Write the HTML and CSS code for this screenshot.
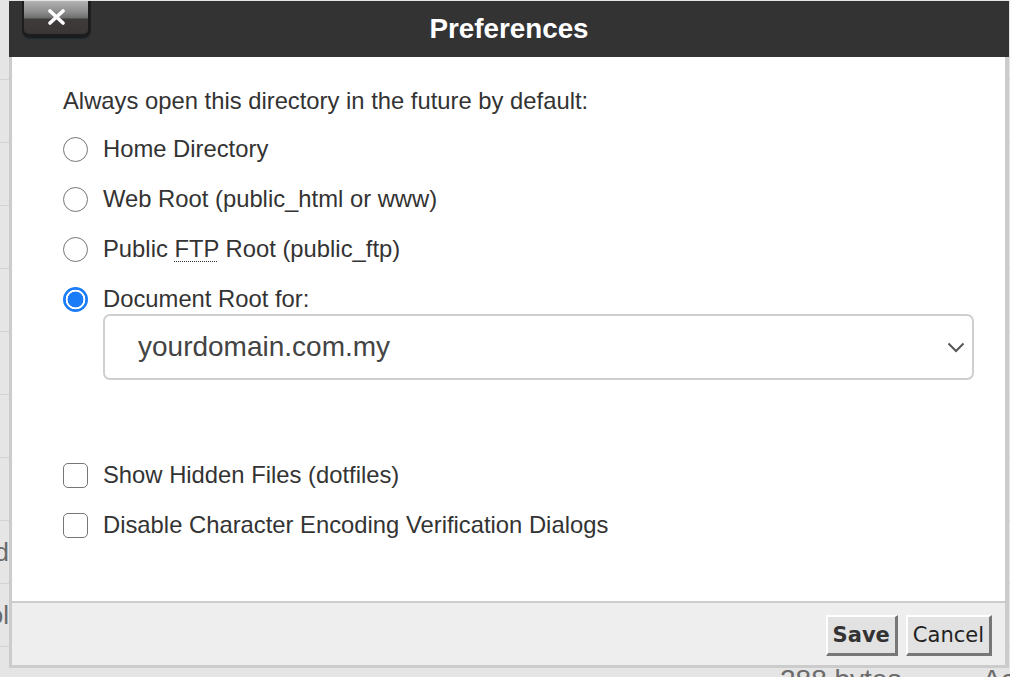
FILE: index.html
```html
<!DOCTYPE html>
<html lang="en">
<head>
<meta charset="utf-8">
<title>Preferences</title>
<link rel="stylesheet" href="styles.css">
</head>
<body>
<div class="page">
  <div class="bg-row"><span class="bg-cell"></span></div>
  <div class="bg-row"><span class="bg-cell"></span></div>
  <div class="bg-row"><span class="bg-cell"></span></div>
  <div class="bg-row"><span class="bg-cell"></span></div>
  <div class="bg-row"><span class="bg-cell"></span></div>
  <div class="bg-row"><span class="bg-cell"></span></div>
  <div class="bg-row"><span class="bg-cell"></span></div>
  <div class="bg-row"><span class="bg-cell"></span></div>
  <div class="bg-row"><span class="bg-cell">Shared</span></div>
  <div class="bg-row"><span class="bg-cell">Tool</span></div>
  <div class="bg-last"><span class="bg-size">288 bytes</span><span class="bg-type">Ac</span></div>
</div>

<div class="dialog">
  <header class="dlg-head">
    <div class="head-left">
      <button class="close" type="button" aria-label="Close">
        <svg class="close-x" width="19" height="16" viewBox="0 0 19 16"><path d="M3 2 L16 14 M16 2 L3 14" stroke="#fff" stroke-width="3.6" stroke-linecap="round"/></svg>
      </button>
    </div>
    <h1 class="title">Preferences</h1>
    <div></div>
  </header>
  <div class="frame">
    <div class="dlg-body">
      <p class="intro">Always open this directory in the future by default:</p>
      <div class="radios">
        <label class="opt"><input class="radio" type="radio" name="dir"><span>Home Directory</span></label>
        <label class="opt"><input class="radio" type="radio" name="dir"><span>Web Root (public_html or www)</span></label>
        <label class="opt"><input class="radio" type="radio" name="dir"><span>Public <abbr title="File Transfer Protocol">FTP</abbr> Root (public_ftp)</span></label>
        <label class="opt"><input class="radio" type="radio" name="dir" checked><span>Document Root for:</span></label>
      </div>
      <div class="select">
        <span>yourdomain.com.my</span>
        <svg class="chev" width="18" height="11" viewBox="0 0 18 11"><path d="M1.5 1.5 L9 9 L16.5 1.5" fill="none" stroke="#555" stroke-width="2"/></svg>
      </div>
      <div class="checks">
        <label class="opt"><input class="check" type="checkbox"><span>Show Hidden Files (dotfiles)</span></label>
        <label class="opt"><input class="check" type="checkbox"><span>Disable Character Encoding Verification Dialogs</span></label>
      </div>
    </div>
    <div class="dlg-foot">
      <button class="btn btn-save" type="button">Save</button>
      <button class="btn" type="button">Cancel</button>
    </div>
  </div>
</div>
</body>
</html>
```

FILE: styles.css
```css
html, body {
  margin: 0;
  padding: 0;
}
body {
  width: 1010px;
  height: 677px;
  overflow: hidden;
  background: #e5e5e5;
  font-family: "Liberation Sans", Arial, sans-serif;
  position: relative;
}

/* background page (partly visible) */
.page {
  display: flex;
  flex-direction: column;
  padding-top: 17px;
}
.bg-row {
  height: 63px;
  border-bottom: 1px solid #d2d2d2;
  display: flex;
  align-items: center;
  box-sizing: border-box;
  color: #6a6a6a;
  font-size: 26px;
}
.bg-cell {
  width: 9px;
  overflow: hidden;
  white-space: nowrap;
  direction: rtl;
  text-align: left;
}
.bg-last {
  display: flex;
  padding-top: 17px;
  color: #6a6a6a;
  font-size: 28px;
  line-height: 32px;
  white-space: nowrap;
}
.bg-size {
  margin-left: 780px;
}
.bg-type {
  margin-left: 81px;
}

/* dialog */
.dialog {
  position: absolute;
  left: 9px;
  top: 1px;
  width: 1000px;
  height: 667px;
  display: flex;
  flex-direction: column;
}
.dlg-head {
  height: 56px;
  flex: none;
  background: #333333;
  display: grid;
  grid-template-columns: 1fr auto 1fr;
  align-items: start;
}
.head-left {
  padding-left: 13px;
}
.close {
  display: flex;
  align-items: center;
  justify-content: center;
  width: 69px;
  height: 37px;
  padding: 0 0 4px 0;
  box-sizing: border-box;
  border: solid #1d1d1d;
  border-width: 0 3px 4px 2px;
  border-radius: 0 0 8px 8px;
  background: linear-gradient(#b3b3b3 0%, #8a8a8a 35%, #6c6c6c 52%, #403b3b 54%, #3a3636 100%);
  box-shadow: 0 1px 1px #1b2a36;
}
.close-x {
  display: block;
  margin-top: 2px;
}
.title {
  margin: 0;
  padding-top: 12px;
  color: #ffffff;
  font-size: 27.8px;
  font-weight: bold;
  line-height: 32px;
}

.frame {
  flex: 1;
  min-height: 0;
  display: flex;
  flex-direction: column;
  border: solid #cccccc;
  border-width: 0 4px 3px 3px;
}
.dlg-body {
  flex: 1;
  background: #ffffff;
  padding: 29px 31px 0 51px;
  display: flex;
  flex-direction: column;
  color: #333333;
  font-size: 23.8px;
}
.intro {
  margin: 0;
  height: 30px;
  line-height: 30px;
}
.radios {
  margin-top: 18px;
  display: flex;
  flex-direction: column;
  gap: 20px;
}
.opt {
  display: flex;
  align-items: center;
  height: 30px;
  gap: 15px;
}
.opt span {
  line-height: 30px;
}
abbr {
  text-decoration: underline dotted;
  text-underline-offset: 4px;
  text-decoration-thickness: 1px;
}
.radio {
  appearance: none;
  -webkit-appearance: none;
  margin: 0;
  width: 25px;
  height: 25px;
  border-radius: 50%;
  border: 1.5px solid #767676;
  box-sizing: border-box;
  background: #ffffff;
}
.radio:checked {
  border: 0;
  background: radial-gradient(circle, #1a7cf7 0 7.6px, #ffffff 8.2px 9.6px, #1a7cf7 10.1px);
}
.check {
  appearance: none;
  -webkit-appearance: none;
  margin: 0;
  width: 25px;
  height: 25px;
  border-radius: 5px;
  border: 1.5px solid #767676;
  box-sizing: border-box;
  background: #ffffff;
}

.select {
  margin-left: 40px;
  height: 66px;
  box-sizing: border-box;
  border: 2px solid #cfcfcf;
  border-radius: 7px;
  display: flex;
  align-items: center;
  justify-content: space-between;
  padding: 0 7px 0 33px;
  color: #444444;
  font-size: 28px;
}
.chev {
  display: block;
}

.checks {
  margin-top: 80px;
  display: flex;
  flex-direction: column;
  gap: 20px;
}

.dlg-foot {
  height: 64px;
  box-sizing: border-box;
  flex: none;
  background: #eeeeee;
  border-top: 2px solid #cccccc;
  display: flex;
  justify-content: flex-end;
  align-items: flex-start;
  gap: 8px;
  padding: 12px 13px 0 0;
}
.btn {
  height: 41px;
  box-sizing: border-box;
  margin: 0;
  padding: 0 5px;
  background: #e2e2e2;
  border: solid;
  border-color: #ffffff #777777 #777777 #ffffff;
  border-width: 2px 3px 3px 2px;
  font-family: "DejaVu Sans", Verdana, sans-serif;
  font-size: 21px;
  color: #222222;
}
.btn-save {
  font-weight: bold;
  color: #333333;
}
```
